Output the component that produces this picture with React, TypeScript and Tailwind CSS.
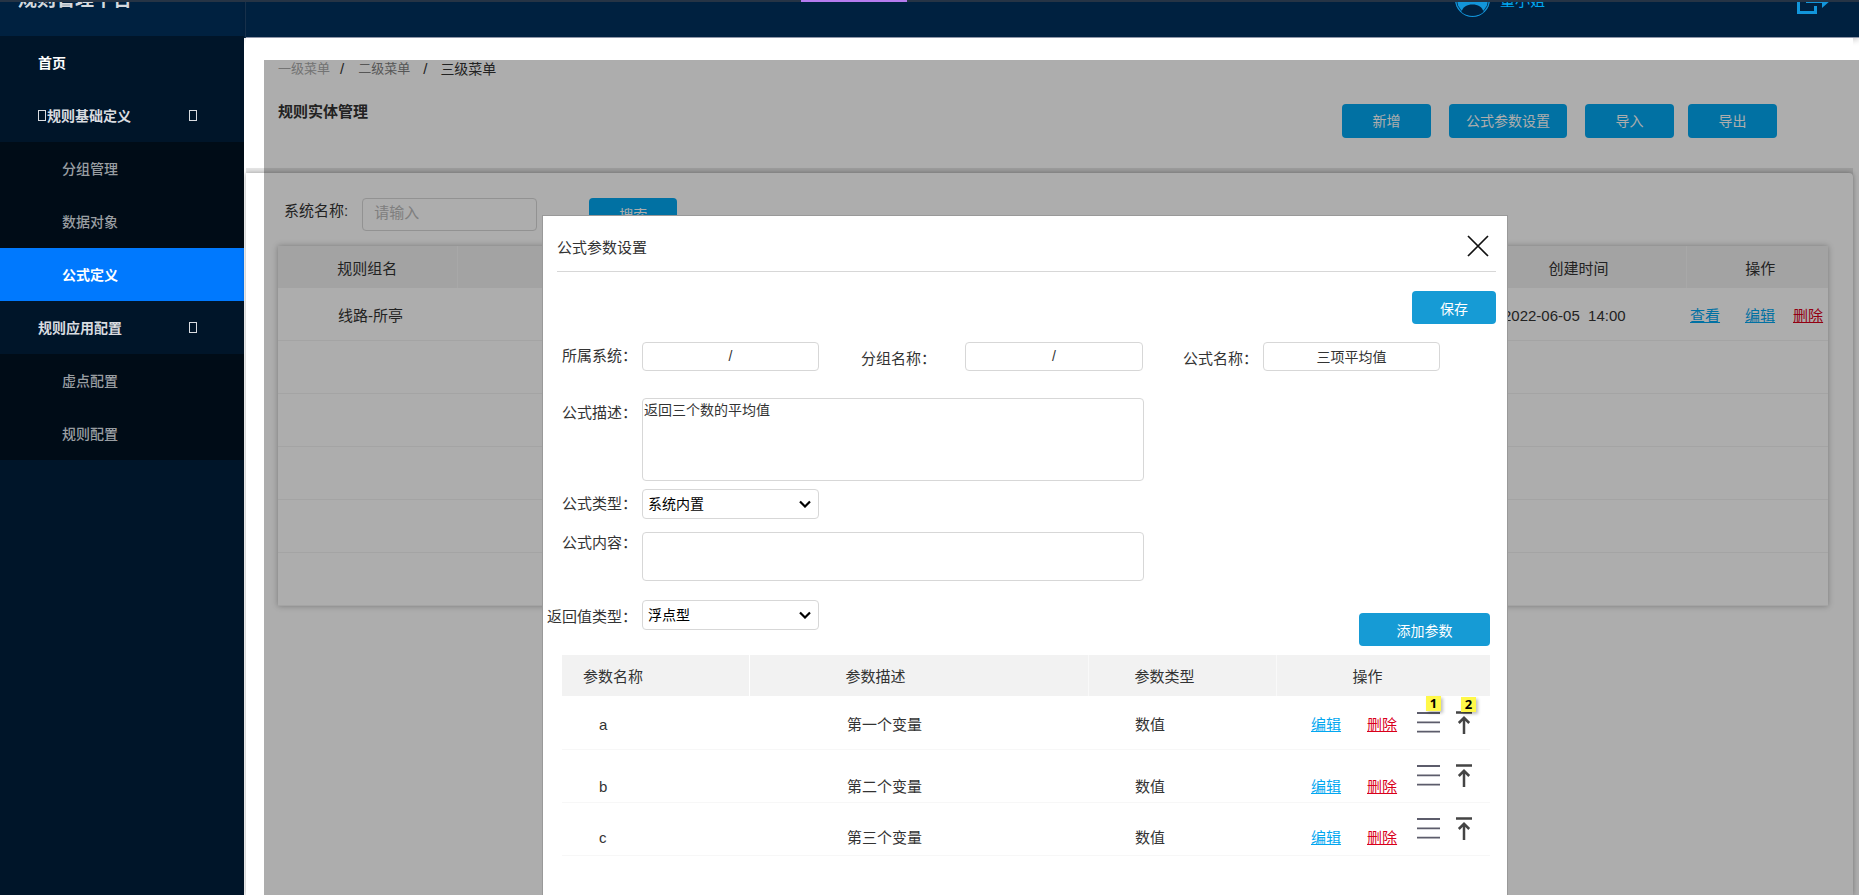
import type { ReactNode } from "react";
import clsx from "clsx";

const menu = [
  { label: "首页", type: "top", bold: true },
  { label: "规则基础定义", type: "top", icon: true, arrow: true },
  { label: "分组管理", type: "sub" },
  { label: "数据对象", type: "sub" },
  { label: "公式定义", type: "active" },
  { label: "规则应用配置", type: "top", arrow: true },
  { label: "虚点配置", type: "sub" },
  { label: "规则配置", type: "sub" },
];

const params = [
  { name: "a", desc: "第一个变量", type: "数值", pad: "pb-3", badges: ["1", "2"] },
  { name: "b", desc: "第二个变量", type: "数值", pad: "pb-[3px]" },
  { name: "c", desc: "第三个变量", type: "数值", pad: "pb-[5px]" },
];

const toolbar = [
  { label: "新增", cls: "w-[89px] mr-[18px]" },
  { label: "公式参数设置", cls: "w-[118px] mr-[18px]" },
  { label: "导入", cls: "w-[89px] mr-[14px]" },
  { label: "导出", cls: "w-[89px]" },
];

// Missing icon-font glyph box
const Glyph = ({ className }: { className?: string }) => (
  <span className={clsx("inline-block h-[11px] w-2 border border-current", className)} />
);

const Badge = ({ n, className }: { n: string; className: string }) => (
  <span
    className={clsx(
      "absolute h-[15px] w-[15px] bg-[#fff849] text-center font-['Open_Sans',sans-serif] text-[13px] leading-[15px] font-bold text-black shadow-[2px_2px_3px_rgba(0,0,0,0.25)]",
      className
    )}>
    {n}
  </span>
);

const Header = () => (
  <header className="-mt-[38px] flex h-[76px] shrink-0 bg-[#002140]">
    <div className="flex w-[246px] items-center border-r border-[#1a3552] pl-[18px] text-[19px] font-bold text-[#d5d9de]">
      规则管理平台
    </div>
    <div className="flex flex-1 items-center justify-end border-b border-[#8f96a8] pr-1 shadow-[0_2px_6px_rgba(0,0,0,0.2)]">
      <svg className="mr-[10px] h-[35px] w-[35px]" viewBox="0 0 35 35">
        <circle cx="17.5" cy="17.5" r="17.5" fill="#1296db" />
        <circle cx="17.5" cy="17.5" r="16" fill="none" stroke="#002140" strokeWidth="0.8" />
        <circle cx="17.5" cy="12.500" r="7.500" fill="#002140" />
        <path d="M6.500 30C8 24.500 12 22.500 17.500 22.500s9.500 2 11 7.500c-3 2.500-6.500 3.800-11 3.800S9.500 32.500 6.500 30z" fill="#002140" />
      </svg>
      <span className="mr-[252px] pt-1 text-[15px] text-[#02a7f0]">董小姐</span>
      <button className="mr-6" aria-label="退出">
        <svg className="h-7 w-[34px]" viewBox="0 0 34 28" fill="#1296db">
          <path d="M0 0h20v8h-3V3H3v22h14v-5h3v8H0z" />
          <path d="M9 11h16V6l9 8-9 8v-5H9z" />
        </svg>
      </button>
    </div>
  </header>
);

const Sidebar = () => (
  <nav className="-mt-0.5 w-[244px] shrink-0 bg-[#001529] text-sm font-medium">
    {menu.map((item) => (
      <a
        key={item.label}
        href="#"
        className={clsx(
          "flex h-[53px] items-center",
          item.type === "top" && "pl-[38px] font-bold",
          item.type === "top" && (item.bold ? "text-white" : "text-[#d9dce0]"),
          item.type === "sub" && "bg-[#000c17] pl-[62px] text-[#999ea2]",
          item.type === "active" && "bg-[#0079fe] pl-[62px] font-bold text-white"
        )}>
        {item.icon && <Glyph className="mr-px" />}
        {item.label}
        {item.arrow && <Glyph className="mr-[47px] ml-auto" />}
      </a>
    ))}
  </nav>
);

const RuleTable = () => (
  <table className="w-full table-fixed border-collapse bg-white text-[15px] shadow-[0_0_6px_rgba(0,0,0,0.3)]">
    <colgroup>
      <col className="w-[179px]" />
      <col />
      <col className="w-[215px]" />
      <col className="w-[142px]" />
    </colgroup>
    <thead>
      <tr className="h-[42px] bg-[#f0f0f0] text-[#333]">
        <th className="border-r border-white/50 pt-1 font-normal">规则组名</th>
        <th className="border-r border-white/50" />
        <th className="border-r border-white/50 pt-1 font-normal">创建时间</th>
        <th className="pt-1 pl-1.5 font-normal">操作</th>
      </tr>
    </thead>
    <tbody>
      <tr className="h-[52px] border-b border-[#f2f2f2]">
        <td className="pt-1 pl-[60px]">线路-所亭</td>
        <td />
        <td className="pt-1 pl-8 whitespace-pre">2022-06-05  14:00</td>
        <td className="pt-1">
          <div className="flex pl-1 underline">
            <a href="#" className="mr-[25px] text-[#02a7f0]">查看</a>
            <a href="#" className="mr-[18px] text-[#02a7f0]">编辑</a>
            <a href="#" className="text-[#d9001b]">删除</a>
          </div>
        </td>
      </tr>
      {[1, 2, 3, 4, 5].map((n) => (
        <tr key={n} className="h-[53px] border-b border-[#f2f2f2]">
          <td colSpan={4} />
        </tr>
      ))}
    </tbody>
  </table>
);

const Content = () => (
  <main className="mr-1.5 ml-0.5 flex min-w-0 flex-1 flex-col bg-[#e6e6e6] text-[#333]">
    <section className="flex h-[130px] shrink-0 flex-col bg-white pt-5 pl-8">
      <div className="flex h-[22px] items-center text-[13px]">
        <span className="text-[#aaa]">一级菜单</span>
        <span className="mx-[10px] text-[15px]">/</span>
        <span className="ml-1 text-[#7f7f7f]">二级菜单</span>
        <span className="mx-[13px] text-[15px]">/</span>
        <span className="text-sm">三级菜单</span>
      </div>
      <div className="flex justify-between pt-[21px]">
        <h1 className="text-[15px] leading-[22px] font-bold">规则实体管理</h1>
        <div className="mt-[3px] mr-[76px] flex">
          {toolbar.map((b) => (
            <button key={b.label} className={clsx("h-[34px] rounded bg-[#02a7f0] text-sm text-white", b.cls)}>
              {b.label}
            </button>
          ))}
        </div>
      </div>
    </section>
    <section className="mt-[5px] flex-1 rounded-tr bg-white pt-[25px] pr-[25px] pl-8 shadow-[0_0_5px_rgba(0,0,0,0.35)]">
      <div className="mb-[14px] flex h-[34px] pl-1.5 text-[15px]">
        <label htmlFor="system" className="mr-[14px] pt-0.5">系统名称:</label>
        <input
          id="system"
          placeholder="请输入"
          className="h-[33px] w-[175px] rounded border border-[#d7d7d7] px-[11px] pb-1 placeholder:text-[#bbb]"
        />
        <button className="ml-[52px] h-[34px] w-[88px] rounded bg-[#02a7f0] text-sm text-white">搜索</button>
      </div>
      <RuleTable />
    </section>
  </main>
);

const field = "rounded border border-[#d7d7d7] bg-white text-sm";

const Select = ({ id, children }: { id: string; children: ReactNode }) => (
  <div className="relative h-[30px] w-[177px]">
    <select id={id} className={clsx(field, "h-full w-full appearance-none px-[5px] text-black")}>
      {children}
    </select>
    <svg
      className="pointer-events-none absolute top-[11px] right-2 h-2 w-3"
      viewBox="0 0 12 8"
      fill="none"
      stroke="#000"
      strokeWidth="2.200">
      <path d="M1 1.500l5 5 5-5" />
    </svg>
  </div>
);

const ParamTable = () => (
  <table className="w-full table-fixed border-collapse text-[15px] leading-6">
    <colgroup>
      <col className="w-[187px]" />
      <col className="w-[339px]" />
      <col className="w-[188px]" />
      <col className="w-[141px]" />
      <col />
    </colgroup>
    <thead>
      <tr className="h-[41px] bg-[#f2f2f2] text-left">
        <th className="border-r border-white pt-0.5 pl-[21px] font-normal">参数名称</th>
        <th className="border-r border-white/50 pt-0.5 pl-[96px] font-normal">参数描述</th>
        <th className="border-r border-white/50 pt-0.5 pl-[46px] font-normal">参数类型</th>
        <th className="pt-0.5 pl-[76px] font-normal" colSpan={2}>操作</th>
      </tr>
    </thead>
    <tbody>
      {params.map((p) => (
        <tr key={p.name} className="h-[53px] border-b border-[#f7f7f7]">
          <td className={clsx("pl-[37px] align-bottom", p.pad)}>{p.name}</td>
          <td className={clsx("pl-[98px] align-bottom", p.pad)}>{p.desc}</td>
          <td className={clsx("pl-[47px] align-bottom", p.pad)}>{p.type}</td>
          <td className={clsx("pl-[35px] align-bottom", p.pad)}>
            <div className="flex gap-[26px] underline">
              <a href="#" className="text-[#02a7f0]">编辑</a>
              <a href="#" className="text-[#d9001b]">删除</a>
            </div>
          </td>
          <td>
            <div className="flex items-center gap-4">
              <button className="relative" aria-label="移动">
                <svg className="h-[23px] w-[23px]" viewBox="0 0 23 23" stroke="#5c5c6b" strokeWidth="1.800">
                  <path d="M0 2h23M0 11.300h23M0 20.600h23" />
                </svg>
                {p.badges && <Badge n={p.badges[0]} className="-top-[15px] left-[9px]" />}
              </button>
              <button className="relative" aria-label="置顶">
                <svg className="h-[23px] w-4" viewBox="0 0 16 23" fill="none" stroke="#444" strokeWidth="2.500">
                  <path d="M0 1.500h16M8 23V7M2.800 12L8 6.800l5.200 5.200" />
                </svg>
                {p.badges && <Badge n={p.badges[1]} className="-top-[14px] left-[5px]" />}
              </button>
            </div>
          </td>
        </tr>
      ))}
    </tbody>
  </table>
);

const ParamDialog = () => (
  <div
    role="dialog"
    aria-label="公式参数设置"
    className="absolute top-[215px] bottom-0 left-[542px] w-[966px] overflow-hidden border border-b-0 border-[#999] bg-white text-[15px] text-[#333]">
    <div className="mr-[11px] ml-[14px] flex h-[56px] items-center justify-between border-b border-[#d7d7d7] pt-2.5">
      <h2>公式参数设置</h2>
      <button className="mr-[7px] mb-1.5" aria-label="关闭">
        <svg className="h-[22px] w-[22px]" viewBox="0 0 22 22" stroke="#111" strokeWidth="1.700">
          <path d="M1 1l20 20M21 1L1 21" />
        </svg>
      </button>
    </div>
    <div className="mt-[19px] mr-[11px] flex justify-end">
      <button className="h-[33px] w-[84px] rounded bg-[#169bd5] pt-0.5 text-sm text-white">保存</button>
    </div>

    <div className="mt-[17px] flex h-[30px] items-center">
      <label htmlFor="sys" className="w-[81px] pl-[19px] whitespace-nowrap">所属系统：</label>
      <input id="sys" defaultValue="/" className={clsx(field, "ml-[18px] h-[29px] w-[177px] text-center")} />
      <label htmlFor="group" className="ml-[42px] w-[75px] pt-1.5 whitespace-nowrap">分组名称：</label>
      <input id="group" defaultValue="/" className={clsx(field, "ml-[29px] h-[29px] w-[178px] text-center")} />
      <label htmlFor="fname" className="ml-[40px] w-[75px] pt-1.5 whitespace-nowrap">公式名称：</label>
      <input id="fname" defaultValue="三项平均值" className={clsx(field, "ml-[5px] h-[29px] w-[177px] text-center")} />
    </div>

    <div className="mt-[27px] flex">
      <label htmlFor="desc" className="w-[99px] pt-1 pl-[19px]">公式描述：</label>
      <textarea id="desc" defaultValue="返回三个数的平均值" className={clsx(field, "h-[83px] w-[502px] resize-none px-px pt-px")} />
    </div>
    <div className="mt-2 flex items-center">
      <label htmlFor="ftype" className="w-[99px] pl-[19px]">公式类型：</label>
      <Select id="ftype">
        <option>系统内置</option>
      </Select>
    </div>
    <div className="mt-[13px] flex">
      <label htmlFor="body" className="w-[99px] pl-[19px]">公式内容：</label>
      <textarea id="body" className={clsx(field, "h-[49px] w-[502px] resize-none")} />
    </div>
    <div className="mt-[19px] flex h-[33px]">
      <label htmlFor="rtype" className="w-[99px] pt-1.5 pl-1 whitespace-nowrap">返回值类型：</label>
      <Select id="rtype">
        <option>浮点型</option>
      </Select>
    </div>

    <div className="-mt-5 mr-[17px] ml-[19px]">
      <div className="mb-[9px] flex justify-end">
        <button className="h-[33px] w-[131px] rounded bg-[#169bd5] pt-0.5 text-sm text-white">添加参数</button>
      </div>
      <ParamTable />
    </div>
  </div>
);

export default function App() {
  return (
    <div className="relative flex h-screen flex-col overflow-hidden bg-white font-['Liberation_Sans','Noto_Sans_CJK_SC',sans-serif]">
      <Header />
      <div className="flex min-h-0 flex-1">
        <Sidebar />
        <Content />
      </div>

      {/* Mask and dialog */}
      <div className="absolute top-[60px] right-0 bottom-0 left-[264px] bg-black/32" />
      <ParamDialog />

      {/* Loading strip */}
      <div className="absolute inset-x-0 top-0 h-0.5 bg-[#263445]">
        <div className="ml-[801px] h-0.5 w-[106px] bg-[#b57bee]" />
      </div>
    </div>
  );
}
